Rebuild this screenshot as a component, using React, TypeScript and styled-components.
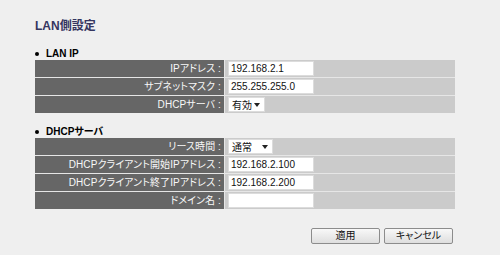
import React from "react";
import styled, { createGlobalStyle } from "styled-components";

const GlobalStyle = createGlobalStyle`
  html, body {
    margin: 0;
    padding: 0;
    background: #efefef;
  }
  body {
    font-family: "Liberation Sans", "Noto Sans CJK JP", sans-serif;
    font-feature-settings: "palt";
  }
`;

const Page = styled.div`
  width: 420px;
  padding: 18px 0 0 35px;
`;

const Title = styled.h1`
  margin: 0;
  height: 16px;
  line-height: 16px;
  font-size: 12px;
  font-weight: bold;
  color: #35355f;
`;

const SectionTitle = styled.h2<{ $top: number }>`
  margin: ${(p) => p.$top}px 0 1px 0;
  height: 10px;
  line-height: 10px;
  font-size: 10px;
  font-weight: bold;
  color: #000;
  display: flex;
  align-items: center;
  &::before {
    content: "";
    width: 4px;
    height: 4px;
    border-radius: 50%;
    background: #000;
    margin: 0 7px 0 0;
  }
`;

const FormTable = styled.div`
  display: grid;
  grid-template-columns: 189px 1fr;
  grid-auto-rows: 17px;
  gap: 1px;
  background: #e6e6e6;
  width: 420px;
`;

const Label = styled.div`
  background: #666666;
  color: #f8f8f8;
  font-size: 10px;
  font-weight: normal;
  line-height: 17px;
  text-align: right;
  padding-right: 3px;
  white-space: nowrap;
  letter-spacing: 0.1px;
`;

const Value = styled.div`
  background: #cbcbcb;
  display: flex;
  align-items: center;
  padding-left: 3px;
`;

const TextInput = styled.input`
  box-sizing: border-box;
  width: 86px;
  height: 15px;
  margin: 0;
  padding: 0 2px;
  border: 1px solid #dcdcdc;
  background: #fff;
  font-family: "Liberation Sans", "Noto Sans CJK JP", sans-serif;
  font-size: 10px;
  color: #111;
  outline: none;
`;

const SelectBox = styled.div<{ $width: number }>`
  box-sizing: border-box;
  width: ${(p) => p.$width}px;
  height: 15px;
  background: #fff;
  border: 1px solid #dcdcdc;
  display: flex;
  align-items: center;
  justify-content: space-between;
  padding: 0 4px 0 3px;
  font-size: 10px;
  color: #111;
  &::after {
    content: "";
    border-left: 3px solid transparent;
    border-right: 3px solid transparent;
    border-top: 4px solid #222;
  }
`;

const ButtonRow = styled.div`
  display: flex;
  justify-content: flex-end;
  gap: 4px;
  width: 418px;
  margin-top: 19px;
`;

const Button = styled.button`
  box-sizing: border-box;
  width: 69px;
  height: 16px;
  padding: 0;
  border: 1px solid #8c8c8c;
  border-radius: 2px;
  background: linear-gradient(#f8f8f8, #dedede);
  font-family: "Liberation Sans", "Noto Sans CJK JP", sans-serif;
  font-feature-settings: "palt";
  font-size: 10px;
  line-height: 14px;
  color: #111;
`;

type Row =
  | { label: string; kind: "input"; value: string }
  | { label: string; kind: "select"; value: string; width: number };

const lanRows: Row[] = [
  { label: "IPアドレス", kind: "input", value: "192.168.2.1" },
  { label: "サブネットマスク", kind: "input", value: "255.255.255.0" },
  { label: "DHCPサーバ", kind: "select", value: "有効", width: 37 },
];

const dhcpRows: Row[] = [
  { label: "リース時間", kind: "select", value: "通常", width: 45 },
  { label: "DHCPクライアント開始IPアドレス", kind: "input", value: "192.168.2.100" },
  { label: "DHCPクライアント終了IPアドレス", kind: "input", value: "192.168.2.200" },
  { label: "ドメイン名", kind: "input", value: "" },
];

function Rows({ rows }: { rows: Row[] }) {
  return (
    <FormTable>
      {rows.map((r) => (
        <React.Fragment key={r.label}>
          <Label>{r.label} :</Label>
          <Value>
            {r.kind === "input" ? (
              <TextInput defaultValue={r.value} />
            ) : (
              <SelectBox $width={r.width}>{r.value}</SelectBox>
            )}
          </Value>
        </React.Fragment>
      ))}
    </FormTable>
  );
}

export default function App() {
  return (
    <>
      <GlobalStyle />
      <Page>
        <Title>LAN側設定</Title>
        <SectionTitle $top={15}>LAN IP</SectionTitle>
        <Rows rows={lanRows} />
        <SectionTitle $top={14}>DHCPサーバ</SectionTitle>
        <Rows rows={dhcpRows} />
        <ButtonRow>
          <Button>適用</Button>
          <Button>キャンセル</Button>
        </ButtonRow>
      </Page>
    </>
  );
}
